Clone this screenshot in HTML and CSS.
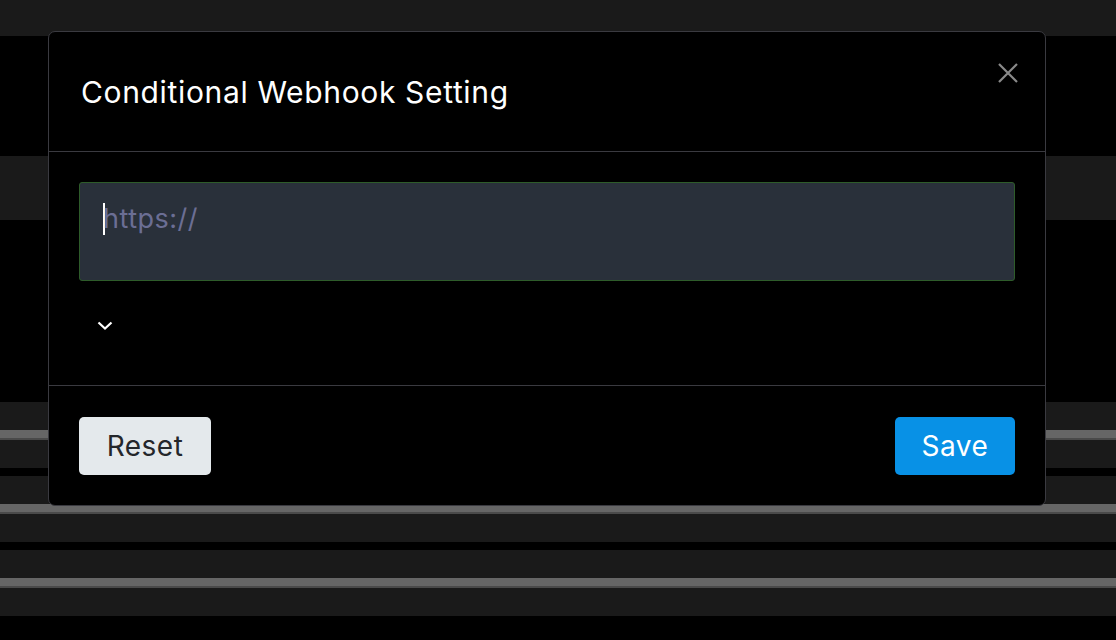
FILE: index.html
```html
<!DOCTYPE html>
<html lang="en">
<head>
    <meta charset="UTF-8">
    <title>Conditional Webhook Setting</title>
    <link rel="stylesheet" href="styles.css">
</head>
<body>
    <div class="page">
        <div class="band band-top"></div>
        <div class="band band-gap"></div>
        <div class="band band-mid"></div>
        <div class="band band-space"></div>
        <div class="rows">
            <div class="row"><div class="row-dark"></div><div class="row-line"></div><div class="row-dark"></div></div>
            <div class="row"><div class="row-dark"></div><div class="row-line"></div><div class="row-dark"></div></div>
            <div class="row"><div class="row-dark"></div><div class="row-line"></div><div class="row-dark"></div></div>
        </div>
    </div>

    <div class="modal">
        <div class="modal-header">
            <h2 class="modal-title">Conditional Webhook Setting</h2>
            <button class="close" aria-label="Close">
                <svg width="22" height="22" viewBox="0 0 22 22">
                    <path d="M2 2 L20 20 M20 2 L2 20" stroke="#8a8a8a" stroke-width="2.2" fill="none"/>
                </svg>
            </button>
        </div>
        <div class="modal-body">
            <div class="webhook-input">
                <span class="caret"></span><span class="placeholder">https://</span>
            </div>
            <div class="toggle">
                <svg width="16" height="9" viewBox="0 0 16 9">
                    <path d="M1.5 1.5 L8 7.5 L14.5 1.5" stroke="#fff" stroke-width="2.2" fill="none"/>
                </svg>
            </div>
        </div>
        <div class="modal-footer">
            <button class="btn btn-reset">Reset</button>
            <button class="btn btn-save">Save</button>
        </div>
    </div>
</body>
</html>
```

FILE: styles.css
```css
body {
    margin: 0;
    background-color: #000;
    font-family: Inter, 'Noto Sans', sans-serif;
    overflow: hidden;
}
.page {
    width: 1116px;
    height: 640px;
}
.band-top {
    height: 36px;
    background-color: #1a1a1a;
}
.band-gap {
    height: 120px;
}
.band-mid {
    height: 64px;
    background-color: #1a1a1a;
}
.band-space {
    height: 182px;
}
.row {
    margin-bottom: 8px;
}
.row-dark {
    height: 28px;
    background-color: #1a1a1a;
}
.row-line {
    height: 8px;
    background-color: #666;
    border-bottom: 2px solid #4a4a4a;
}

/* modal over the page */
.modal {
    position: absolute;
    top: 31px;
    left: 48px;
    width: 996px;
    height: 473px;
    background-color: #000;
    border: 1px solid #3a3a40;
    border-radius: 7px;
    display: flex;
    flex-direction: column;
}
.modal-header {
    height: 119px;
    border-bottom: 1px solid #3a3a40;
    padding: 0 32px;
    display: flex;
    align-items: center;
    position: relative;
}
.modal-title {
    margin: 0;
    color: #fff;
    font-size: 30px;
    font-weight: 400;
    letter-spacing: 0.65px;
}
.close {
    position: absolute;
    top: 30px;
    right: 26px;
    background: none;
    border: none;
    padding: 0;
    width: 22px;
    height: 22px;
    cursor: pointer;
}
.close svg {
    display: block;
}
.modal-body {
    padding: 30px 30px 0;
    height: 203px;
}
.webhook-input {
    background-color: #29303a;
    border: 1px solid #2e5c2a;
    border-radius: 3px;
    padding: 19px 0 0 23px;
    box-sizing: border-box;
    height: 99px;
    display: flex;
    align-items: flex-start;
}
.caret {
    width: 2px;
    height: 32px;
    margin-top: 1px;
    margin-right: -2px;
    background-color: #fff;
}
.placeholder {
    color: #6b6e94;
    font-size: 27px;
    line-height: 34px;
    letter-spacing: 0.5px;
}
.toggle {
    margin-top: 40px;
    padding-left: 18px;
    height: 9px;
}
.toggle svg {
    display: block;
}
.modal-footer {
    border-top: 1px solid #3a3a40;
    padding: 31px 30px 0;
    display: flex;
    justify-content: space-between;
    align-items: flex-start;
}
.btn {
    height: 58px;
    border: none;
    border-radius: 5px;
    font-family: Inter, 'Noto Sans', sans-serif;
    font-size: 28px;
    letter-spacing: 0.5px;
    padding: 0;
    cursor: pointer;
}
.btn-reset {
    width: 132px;
    background-color: #e4e9ec;
    color: #24272b;
}
.btn-save {
    width: 120px;
    background-color: #0891e6;
    color: #fff;
}
```
